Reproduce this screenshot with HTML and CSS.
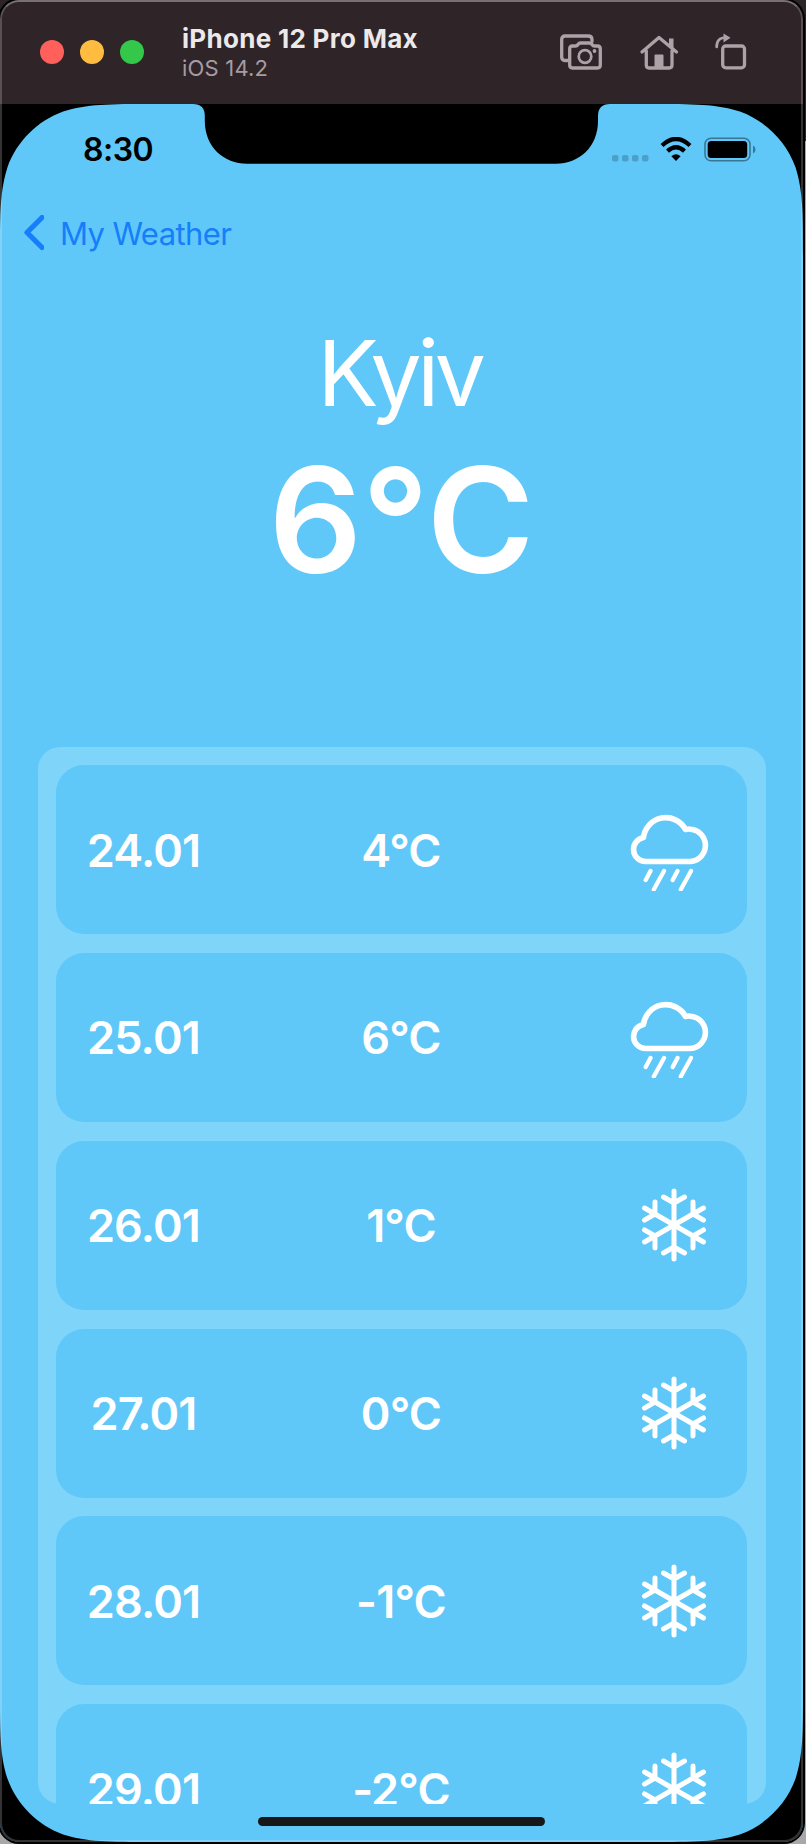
FILE: index.html
```html
<!DOCTYPE html>
<html lang="en">
<head>
<meta charset="utf-8">
<title>My Weather</title>
<link rel="stylesheet" href="styles.css">
</head>
<body>
<svg class="defs" aria-hidden="true">
  <defs>
    <symbol id="rain" viewBox="0 0 80 82">
      <path d="M15.500 52.500H60.500A16.200 16.200 0 0 0 60.500 20.200Q58 19.800 55.500 20.500A22.400 22.400 0 0 0 13.500 28.500A12.100 12.100 0 0 0 15.500 52.500Z" stroke-width="5.600"/>
      <path d="M20.500 62 15.700 71M34 62 23.800 80.500M47.500 62 42.700 71M61 62 50.800 80.500" stroke-width="4.300"/>
    </symbol>
    <symbol id="snow" viewBox="-34 -38 68 76">
      <g id="arms"><path id="arm" d="M0 0V-34M-10.500-28 0-22 10.500-28"/>
      <use href="#arm" transform="rotate(60)"/><use href="#arm" transform="rotate(120)"/><use href="#arm" transform="rotate(180)"/><use href="#arm" transform="rotate(240)"/><use href="#arm" transform="rotate(300)"/></g>
    </symbol>
    <path id="corner" d="M0 0H152.870C108.850 0 86.840 0 63.150 7.490C37.280 16.910 16.910 37.280 7.490 63.150C0 86.840 0 108.850 0 152.870Z"/>
  </defs>
</svg>
<div class="window">
  <header class="titlebar">
    <div class="lights"><i class="red"></i><i class="yellow"></i><i class="green"></i></div>
    <div class="device"><strong>iPhone 12 Pro Max</strong><span>iOS 14.2</span></div>
    <svg class="tools" viewBox="0 0 190 40">
      <g fill="none" stroke="#ada2a7" stroke-width="3.300" stroke-linejoin="round" stroke-linecap="round">
        <path d="M8 28.500H5Q1.700 28.500 1.700 25V7.500Q1.700 4 5 4H28Q32 4 32 7.500V9.500"/>
        <path d="M12.500 14H15.500Q17 14 18 12.500T20.500 11H29.500Q31 11 32 12.500T34.500 14H37.500Q40.300 14 40.300 17V33Q40.300 36 37.500 36H12.500Q9.700 36 9.700 33V17Q9.700 14 12.500 14Z"/>
        <circle cx="25" cy="24.500" r="6.300" stroke-width="2.700"/>
        <path d="M82 20 99 5.500 116.500 20M86.300 19V33Q86.300 36 89 36H109Q112 36 112 33V19"/>
        <rect x="162.700" y="14" width="21.800" height="21.800" rx="3"/>
        <path d="M156.700 15Q156.500 5.500 166 5.500" stroke-width="2.700"/>
      </g>
      <g fill="#ada2a7"><circle cx="34.500" cy="19" r="1.900"/><path d="M94.500 23.500Q94.500 22.500 95.500 22.500H102.500Q103.500 22.500 103.500 23.500V36H94.500ZM109 6.500H113.500V17L109 13ZM163.500 1.500V10.500L170.500 5.800Z"/></g>
    </svg>
  </header>
  <main class="screen">
    <svg class="bezel" viewBox="0 0 803 1738">
      <use href="#corner"/><use href="#corner" transform="translate(803 0) scale(-1 1)"/>
      <use href="#corner" transform="translate(0 1738) scale(1 -1)"/><use href="#corner" transform="translate(803 1738) scale(-1 -1)"/>
      <path d="M193 0Q204.800 0 204.800 12V17C204.800 43 224 59.800 247 59.800H556C579 59.800 598 43 598 17V12Q598 0 610 0Z"/>
    </svg>
    <div class="status">
      <time>8:30</time>
      <svg class="signals" viewBox="0 0 146 28">
        <g fill="#4ca0c7"><rect x="0" y="18" width="6.500" height="6.500" rx="2"/><rect x="10" y="18" width="6.500" height="6.500" rx="2"/><rect x="20" y="18" width="6.500" height="6.500" rx="2"/><rect x="30" y="18" width="6.500" height="6.500" rx="2"/></g>
        <path d="M50 8.500Q64 -4.500 78 8.500" fill="none" stroke="#000" stroke-width="4.300"/>
        <path d="M55.500 14.200Q64 6.500 72.500 14.200" fill="none" stroke="#000" stroke-width="4.300"/>
        <path d="M59.400 19.300Q64 15.200 68.600 19.300L64 24Z"/>
        <rect x="93" y="1.200" width="45" height="22.500" rx="6" fill="none" stroke="#397794" stroke-width="1.600"/>
        <rect x="95.700" y="4" width="39.500" height="17" rx="3.500"/><path d="M141 8.500Q143.500 9.500 143.500 12.500T141 16.500Z" fill="#397794"/>
      </svg>
    </div>
    <nav class="back"><svg viewBox="0 0 20 36"><path d="M18 2.500 3 17.500 18 32.500"/></svg><span>My Weather</span></nav>
    <section class="now"><h1>Kyiv</h1><p>6°C</p></section>
    <section class="forecast">
      <div class="day"><b>24.01</b><b>4°C</b><svg class="rain"><use href="#rain"/></svg></div>
      <div class="day"><b>25.01</b><b>6°C</b><svg class="rain"><use href="#rain"/></svg></div>
      <div class="day"><b>26.01</b><b>1°C</b><svg class="snow"><use href="#snow"/></svg></div>
      <div class="day"><b>27.01</b><b>0°C</b><svg class="snow"><use href="#snow"/></svg></div>
      <div class="day"><b>28.01</b><b>-1°C</b><svg class="snow"><use href="#snow"/></svg></div>
      <div class="day"><b>29.01</b><b>-2°C</b><svg class="snow"><use href="#snow"/></svg></div>
    </section>
    <div class="home"></div>
  </main>
</div>
</body>
</html>
```
FILE: styles.css
```css
* { box-sizing: border-box; }
html { background: #a9a7a8; }
body { margin: 0; height: 1844px; background: linear-gradient(#2c2428 141px, #a9a7a8 141px); font-family: Inter, "Liberation Sans", sans-serif; overflow: hidden; }
.defs { display: block; width: 0; height: 0; }
.window { position: relative; width: 803px; height: 1842px; overflow: hidden; border-radius: 19px; background: #000; box-shadow: 0 0 0 2px #000; }
.window::after { content: ""; position: absolute; inset: 0; border: 2px solid rgba(255,255,255,.2); border-top-color: rgba(255,255,255,.35); border-radius: 19px; pointer-events: none; }
.titlebar { height: 104px; background: #2f2529; display: flex; align-items: center; padding-left: 40px; }
.lights { display: flex; gap: 16px; }
.lights i { width: 24px; height: 24px; border-radius: 50%; }
.red { background: #ff605c; }
.yellow { background: #ffbc40; }
.green { background: #34c84a; }
.device { margin-left: 38px; width: 378px; padding-top: 1px; display: flex; flex-direction: column; white-space: nowrap; }
.device strong { font-size: 26px; line-height: 32px; font-weight: 700; color: #ebe9ea; letter-spacing: .3px; }
.device span { font-size: 22px; line-height: 27px; color: #a79ca1; letter-spacing: .2px; }
.tools { width: 190px; height: 40px; }
.screen { position: relative; height: 1738px; background: #5fc8f8; color: #fff; }
.bezel { position: absolute; inset: 0; width: 803px; height: 1738px; }
.status { position: relative; height: 90px; padding: 26px 45px 0 83px; display: flex; justify-content: space-between; align-items: flex-start; color: #000; }
.status time { font-size: 32px; line-height: 40px; font-weight: 600; letter-spacing: -.5px; }
.signals { width: 146px; height: 28px; margin-top: 7px; }
.back { display: flex; align-items: center; height: 78px; padding-left: 24px; gap: 16px; color: #167efb; font-size: 31px; letter-spacing: -.6px; }
.back svg { width: 20px; height: 36px; fill: none; stroke: currentColor; stroke-width: 5.2; stroke-linecap: round; stroke-linejoin: round; }
.now { height: 474.5px; padding-top: 46px; text-align: center; }
.now h1 { margin: 0; padding-right: 4px; font-size: 91px; line-height: 110px; font-weight: 400; letter-spacing: -4.5px; }
.now p { margin: 0; padding-top: 2px; font-size: 146px; line-height: 180px; font-weight: 600; }
.forecast { width: 728px; height: 1057.500px; margin: 0 0 0 37.500px; padding: 18.700px 18.500px 0; border-radius: 22px; background: #7fd4f9; overflow: hidden; display: flex; flex-direction: column; gap: 18.800px; }
.day { flex: 0 0 169px; border-radius: 28px; background: #5fc8f8; display: grid; grid-template-columns: 175px 340px 1fr; align-items: center; text-align: center; font-size: 45px; font-weight: 600; letter-spacing: -.8px; }
.day b { font-weight: 600; padding-top: 1px; }
.day svg { fill: none; stroke: #fff; stroke-linecap: round; stroke-linejoin: round; stroke-width: 5; }
.day .rain { width: 80px; height: 82px; margin-left: 59px; }
.snow { width: 68px; height: 76px; margin-left: 69px; }
.home { position: absolute; left: 258px; bottom: 16px; width: 287px; height: 9px; border-radius: 5px; background: #171717; }
```
